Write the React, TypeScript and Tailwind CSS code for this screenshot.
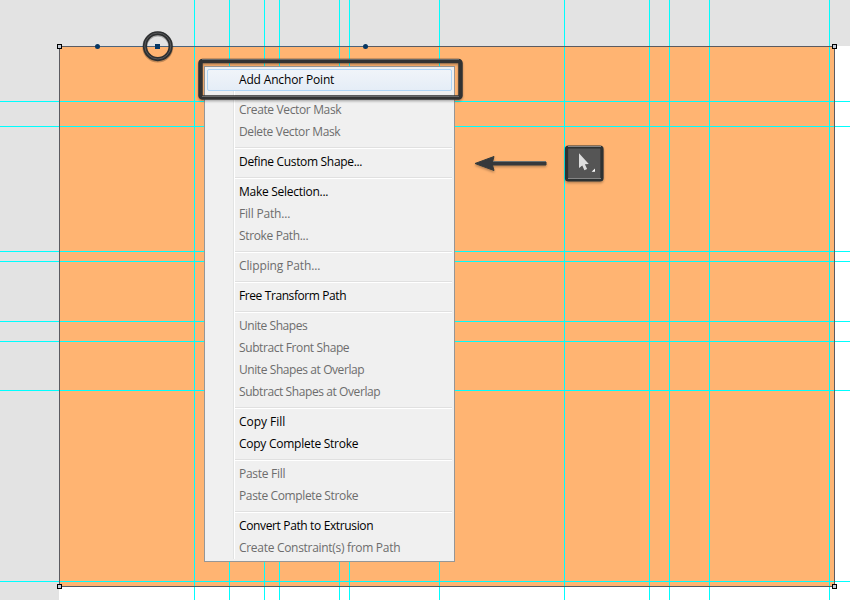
import React from "react";

type Item = { label: string; enabled?: boolean; width: number };

const groups: Item[][] = [
  [{ label: "Add Anchor Point", enabled: true, width: 95 }],
  [
    { label: "Create Vector Mask", width: 102 },
    { label: "Delete Vector Mask", width: 101 },
  ],
  [{ label: "Define Custom Shape...", enabled: true, width: 123 }],
  [
    { label: "Make Selection...", enabled: true, width: 89 },
    { label: "Fill Path...", width: 51 },
    { label: "Stroke Path...", width: 69 },
  ],
  [{ label: "Clipping Path...", width: 81 }],
  [{ label: "Free Transform Path", enabled: true, width: 107 }],
  [
    { label: "Unite Shapes", width: 68 },
    { label: "Subtract Front Shape", width: 110 },
    { label: "Unite Shapes at Overlap", width: 125 },
    { label: "Subtract Shapes at Overlap", width: 141 },
  ],
  [
    { label: "Copy Fill", enabled: true, width: 46 },
    { label: "Copy Complete Stroke", enabled: true, width: 119 },
  ],
  [
    { label: "Paste Fill", width: 46 },
    { label: "Paste Complete Stroke", width: 119 },
  ],
  [
    { label: "Convert Path to Extrusion", enabled: true, width: 134 },
    { label: "Create Constraint(s) from Path", width: 161 },
  ],
];

const columns = [194, 229, 264, 279, 339, 349, 439, 564, 649, 669, 709, 829];
const rows = [101, 126, 251, 261, 321, 341, 390, 581];

// Scales a label's letter spacing so that it fills its measured width.
function Label({ item }: { item: Item }) {
  const ref = React.useRef<HTMLSpanElement>(null);
  const [spacing, setSpacing] = React.useState(0);
  React.useLayoutEffect(() => {
    if (ref.current) {
      const natural = ref.current.getBoundingClientRect().width;
      setSpacing((item.width + 0.2 - natural) / item.label.length);
    }
  }, [item]);
  return (
    <span ref={ref} style={{ letterSpacing: spacing }} className={item.enabled ? "text-black" : "text-[#6d6d6d]"}>
      {item.label}
    </span>
  );
}

function Menu() {
  return (
    <div className="absolute left-[204px] top-[66px] flex w-[251px] flex-col border border-[#969696] bg-[#f0f0f0] p-[2px] font-['Open_Sans','Noto_Sans',sans-serif] text-[12px] leading-[22px]">
      <div className="absolute inset-y-[2px] left-7 w-[2px] border-l border-[#e2e3e3] bg-white" />
      {groups.map((group, i) => (
        <div key={i} className="flex flex-col">
          {i > 0 && (
            <div className="h-2 pl-7 pt-1">
              <div className="h-[2px] border-t border-[#e0e0e0] bg-white" />
            </div>
          )}
          {group.map((item) => (
            <div
              key={item.label}
              className={
                i === 0
                  ? "relative h-[22px] whitespace-nowrap rounded-[2px] border border-[#aed4f5] bg-linear-to-b from-[#f0f4f9] to-[#e5edf7] pl-[31px] leading-5"
                  : "h-[22px] whitespace-nowrap pl-8"
              }
            >
              <Label item={item} />
            </div>
          ))}
        </div>
      ))}
    </div>
  );
}

export default function App() {
  return (
    <div className="relative flex h-[600px] w-[850px] flex-col overflow-hidden bg-white">
      <div className="h-[46px] bg-[#e3e3e3]" />
      <div className="flex flex-1">
        <div className="w-[59px] bg-[#e3e3e3]" />
        <div className="h-[541px] w-[776px] bg-[#ffb472]" />
      </div>

      <svg className="absolute inset-0" width="850" height="600" fill="none">
        <g stroke="#00ffff">
          {columns.map((x) => (
            <path key={x} d={`M${x + 0.5} 0V600`} />
          ))}
          {rows.map((y) => (
            <path key={y} d={`M0 ${y + 0.5}H850`} />
          ))}
        </g>
        <path d="M59.5 46.5H834.5V586.5H59.5Z" stroke="#5b5b61" />
        <path d="M97 46.5H365" stroke="#4c647c" />
        {[59, 834].map((x) =>
          [46, 586].map((y) => (
            <rect key={`${x}-${y}`} x={x - 1.5} y={y - 1.5} width="4" height="4" fill="#c3cbd6" stroke="#000" />
          ))
        )}
        <circle cx="97.5" cy="46.5" r="2.5" fill="#073763" />
        <circle cx="365.5" cy="46.5" r="2.5" fill="#073763" />
        <rect x="155" y="44" width="5" height="5" fill="#073763" />
        <circle cx="157.8" cy="47" r="13" stroke="#000" strokeOpacity="0.25" strokeWidth="5" />
        <circle cx="157.8" cy="46.2" r="12.9" stroke="#2d2f30" strokeWidth="4.1" />
        <circle cx="157.8" cy="46" r="13" stroke="#68696b" strokeWidth="0.7" />
      </svg>

      <Menu />

      <svg className="absolute inset-0" width="850" height="600" fill="none">
        <defs>
          <filter id="shade" x="-20%" y="-20%" width="140%" height="150%">
            <feDropShadow dx="0" dy="1.5" stdDeviation="0.8" floodColor="#000" floodOpacity="0.3" />
          </filter>
        </defs>
        <g filter="url(#shade)">
          <rect x="200.5" y="61" width="260" height="36.5" rx="2" stroke="#303133" strokeWidth="4.5" />
          <path d="M202 59.5H459M202 96.5H459" stroke="#77777a" strokeWidth="0.8" />
        </g>
        <g filter="url(#shade)">
          <path d="M475 163.5L494 156.5L492.5 162H546V165H492.5L494 170.5Z" fill="#35393a" stroke="#35393a" strokeLinejoin="round" />
          <path d="M493 161.5H546" stroke="#68706f" />
        </g>
        <g filter="url(#shade)">
          <rect x="566.5" y="147" width="35.5" height="33" rx="2" fill="#545454" stroke="#2e3031" strokeWidth="3.2" />
          <path d="M568 146.5H601M568 178.5H601" stroke="#858585" strokeWidth="1" />
        </g>
        <path d="M579 153.3V168L582.3 165.6L584.4 170.2L587.1 169L584.9 164.2L588.8 163.9Z" fill="#dedede" />
        <path d="M595 168.5V171.8H591.6Z" fill="#fff" />
      </svg>
    </div>
  );
}
